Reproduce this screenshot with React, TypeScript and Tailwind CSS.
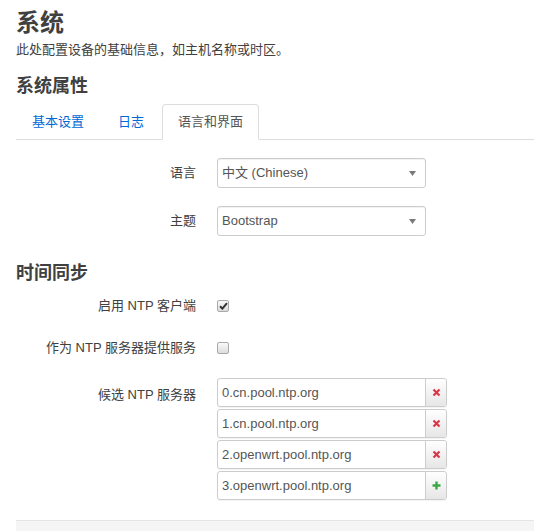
import React from 'react';

const font = "font-['Liberation_Sans','Noto_Sans_CJK_SC',sans-serif]";

const servers = [
  '0.cn.pool.ntp.org',
  '1.cn.pool.ntp.org',
  '2.openwrt.pool.ntp.org',
  '3.openwrt.pool.ntp.org',
];

const RemoveIcon = () => (
  <svg width="9" height="9" viewBox="0 0 9 9">
    <path d="M1.5 1.5 L7.5 7.5 M7.5 1.5 L1.5 7.5" stroke="#d9364a" strokeWidth="2.2" strokeLinecap="butt" />
  </svg>
);

const AddIcon = () => (
  <svg width="9" height="9" viewBox="0 0 9 9">
    <path d="M4.5 0.5 V8.5 M0.5 4.5 H8.5" stroke="#3aa845" strokeWidth="2.4" />
  </svg>
);

const Checkbox = ({ checked }: { checked?: boolean }) => (
  <span className="flex h-[12px] w-[12px] items-center justify-center rounded-[2px] border border-[#a9a9a9] bg-gradient-to-b from-[#fafafa] to-[#dcdcdc]">
    {checked && (
      <svg width="9" height="8" viewBox="0 0 9 8">
        <path d="M1 4.2 L3.4 6.6 L8 1.2" fill="none" stroke="#333" strokeWidth="2" />
      </svg>
    )}
  </span>
);

const Select = ({ value }: { value: string }) => (
  <div className="flex h-[30px] w-[209px] items-center justify-between rounded-[3px] border border-[#ccc] bg-white pl-[4px] pr-[9px] text-[13px] text-[#555] shadow-[inset_0_1px_1px_rgba(0,0,0,0.06)]">
    <span>{value}</span>
    <svg width="7" height="5" viewBox="0 0 7 5">
      <path d="M0 0 H7 L3.5 5 Z" fill="#7a7a7a" />
    </svg>
  </div>
);

const Row = ({ label, children, className = '' }: { label: string; children: React.ReactNode; className?: string }) => (
  <div className={`flex h-[30px] items-center ${className}`}>
    <div className="w-[180px] text-right text-[13px] text-[#404040]">{label}</div>
    <div className="ml-[21px]">{children}</div>
  </div>
);

export default function App() {
  return (
    <div className={`${font} flex min-h-[531px] flex-col bg-white pl-4 text-[#404040]`}>
      <h2 className="pt-[9px] text-[24px] font-bold leading-[28px] text-[#404040]">系统</h2>
      <p className="mt-[4px] text-[13px] leading-[18px] text-[#404040]">此处配置设备的基础信息，如主机名称或时区。</p>

      <h3 className="mt-[15px] text-[18px] font-bold leading-[24px]">系统属性</h3>

      {/* Tabs */}
      <ul className="mt-[6px] flex border-b border-[#ddd] text-[13px]">
        <li className="-mb-px mr-[2px] flex h-[36px] items-center border border-transparent px-[15px] text-[#0069d6]">基本设置</li>
        <li className="-mb-px mr-[2px] flex h-[36px] items-center border border-transparent px-[15px] text-[#0069d6]">日志</li>
        <li className="-mb-px flex h-[36px] items-center rounded-t-[4px] border border-[#ddd] border-b-white bg-white px-[15px] text-[#555]">语言和界面</li>
      </ul>

      <Row label="语言" className="mt-[18px]">
        <Select value="中文 (Chinese)" />
      </Row>
      <Row label="主题" className="mt-[18px]">
        <Select value="Bootstrap" />
      </Row>

      <h3 className="mt-[25px] text-[18px] font-bold leading-[24px]">时间同步</h3>

      <Row label="启用 NTP 客户端" className="mt-[6px]">
        <Checkbox checked />
      </Row>
      <Row label="作为 NTP 服务器提供服务" className="mt-[12px]">
        <Checkbox />
      </Row>

      <div className="mt-[15px] flex">
        <div className="w-[180px] pt-[7px] text-right text-[13px] text-[#404040]">候选 NTP 服务器</div>
        <div className="ml-[21px] flex flex-col gap-[2px]">
          {servers.map((s, i) => (
            <div key={s} className="flex h-[29px] w-[230px] rounded-[3px] border border-[#ccc] shadow-[0_1px_1px_rgba(0,0,0,0.05)]">
              <div className="flex flex-1 items-center pl-[4px] text-[13px] text-[#555]">{s}</div>
              <div className="flex w-[21px] items-center justify-center rounded-r-[3px] border-l border-[#ccc] bg-gradient-to-b from-white to-[#e6e6e6]">
                {i === servers.length - 1 ? <AddIcon /> : <RemoveIcon />}
              </div>
            </div>
          ))}
        </div>
      </div>

      <div className="mt-[20px] flex-1 border-t border-[#e5e5e5] bg-[#f5f5f5]" />
    </div>
  );
}
